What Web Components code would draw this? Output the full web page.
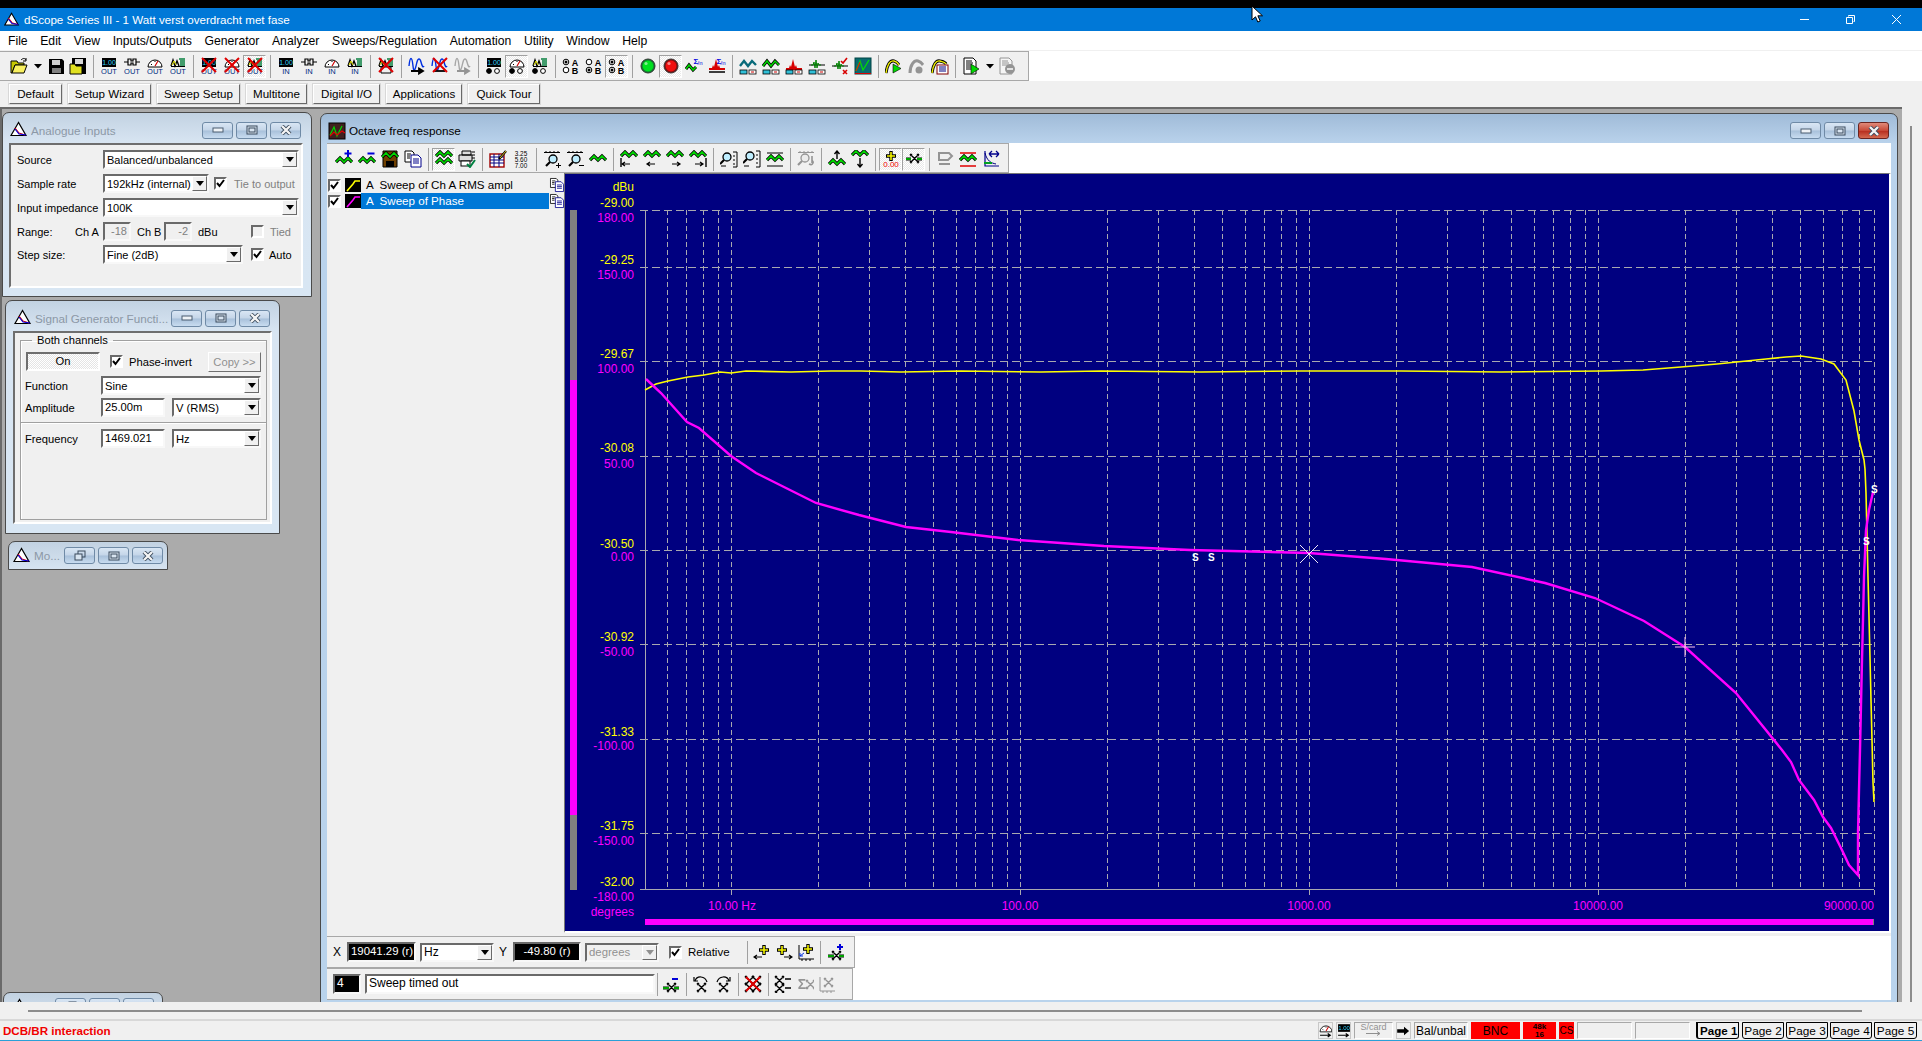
<!DOCTYPE html>
<html>
<head>
<meta charset="utf-8">
<title>dScope Series III</title>
<style>
  html, body { margin: 0; padding: 0; background: #f0f0f0; overflow: hidden; }
  body { font: 12px "Liberation Sans", Arial, sans-serif; color: #000; }
</style>
</head>
<body>
<ds-app></ds-app>
<script>
// --- icon bits, all on an 18x18 grid
const txt = (x, y, s, fs, fill, w) =>
  `<text x="${x}" y="${y}" font-size="${fs}" fill="${fill}" font-family="Liberation Sans" font-weight="${w || 'normal'}" text-anchor="middle">${s}</text>`;
const line = (d, c, w) => `<path d="${d}" fill="none" stroke="${c || '#000'}" stroke-width="${w || 1}"/>`;
const wave = (dy, c) => {
  const d = `M1 ${11 + (dy || 0)}l4-4 4 4 4-4 4 4`;
  return line(d, '#000', 3.2) + line(d, c || '#00d800', 1.6);
};
const grey = (s) => `<g opacity=".38" style="filter:grayscale(1)">${s}</g>`;
const redX = line('M2 1L16 15M16 1L2 15', '#e00000', 2);
const disp = `<rect x="2" y="1" width="14" height="9" fill="#000"/>` + txt(9, 8, '1.00', 7, '#30d0ff');
const conn = line('M1 5h4M13 5h4M5 2h3v2h2V2h3v6h-3V6H8v2H5z', '#000', 1.2);
const meter = `<path d="M2 10a7 7 0 0 1 14 0z" fill="#fff" stroke="#000"/>` + line('M9 9l3-5', '#d00000', 1.2) + line('M5 7l1 1M9 4v1', '#000');
const multi = line('M2 9l2-6 2 6 2-5 2 5', '#000', 1.4) + line('M3 8l2-4 2 4', '#e8e800', 1) + line('M10 2h6M11 4h5M11 6h5M11 8h5', '#088040', 1.4) + line('M2 9.5h14', '#000');
const io = (glyph, label, x) => glyph + txt(9, 17, label, 7.5, '#002a80') + (x ? redX : '');
const floppy = (x, y, s) => `<g transform="translate(${x} ${y}) scale(${s})"><path d="M1 1h13l2 2v13H1z" fill="#000"/><rect x="4" y="2" width="8" height="5" fill="#d0d0d0"/><rect x="4" y="10" width="9" height="5" fill="#808080"/></g>`;
const radios = `<circle cx="4" cy="14" r="2.4" fill="#000" stroke="#000"/><circle cx="12" cy="14" r="2.4" fill="#fff" stroke="#000"/>`;
const ab = (a, b) =>
  `<circle cx="4" cy="5" r="2.8" fill="#fff" stroke="#000"/>${a ? '<circle cx="4" cy="5" r="1.5"/>' : ''}` +
  `<circle cx="4" cy="13" r="2.8" fill="#fff" stroke="#000"/>${b ? '<circle cx="4" cy="13" r="1.5"/>' : ''}` +
  txt(13, 9, 'A', 9, '#000', 'bold') + txt(13, 17, 'B', 9, '#000', 'bold');
const led = (c, d) => `<circle cx="9" cy="9" r="7" fill="${d}" stroke="#333"/><circle cx="9" cy="9" r="5.4" fill="${c}"/><circle cx="7" cy="6.5" r="1.6" fill="#fff" opacity=".5"/>`;
const boxes = `<rect x="1" y="13" width="7" height="4" fill="#30c0d8" stroke="#000" stroke-width=".8"/><rect x="10" y="13" width="7" height="4" fill="#fff" stroke="#000" stroke-width=".8"/>` + line('M12 15h3', '#d00000');
const peak = (c) => `<path d="M1 11h3l1-3 1 2 2-8 2 8 1-2 1 3h5v2H1z" fill="${c}"/>`;
const sigma = txt(11, 7, '&#931;', 8, '#0000e0', 'bold') + txt(15, 8, '/n', 6, '#0000e0');
const lens = (x, y) => `<circle cx="${x}" cy="${y}" r="4" fill="#bfeeff" stroke="#000" stroke-width="1.3"/>` + line(`M${x - 3} ${y + 3}l-4 4`, '#000', 2.2);
const ruler = line('M1 2.5h16M3 1v2M7 1v2M11 1v2M15 1v2', '#000');
const yellowPlus = (x, y) => line(`M${x} ${y - 5}v10M${x - 5} ${y}h10`, '#000', 3.4) + line(`M${x} ${y - 4}v8M${x - 4} ${y}h8`, '#f4f400', 1.6);
const hatchX = (x, y, c) => `<g transform="translate(${x} ${y})">` + line('M0 0l9 9M9 0L0 9M2 0L0 2M7 0l2 2M0 7l2 2M9 7L7 9', c || '#000', 1.4) + '</g>';
const copyDocs = `<path d="M1 1h7l2 2v9H1z" fill="#fff" stroke="#000"/><path d="M7 5h7l3 3v9H7z" fill="#fff" stroke="#00008a"/>` + line('M9 9h6M9 11h6M9 13h6', '#00008a') + line('M3 4h4M3 6h3M3 8h3', '#000');
const arrowH = (x, y, dir) => dir > 0
  ? line(`M${x} ${y}h8M${x + 5} ${y - 2}l3 2-3 2`, '#000', 1.2)
  : line(`M${x + 8} ${y}h-8M${x + 3} ${y - 2}l-3 2 3 2`, '#000', 1.2);
const blueWave = line('M1 9c1-10 3-10 4 0s3 0 4-4 3-4 4 0 2 6 3 4', '#0030e0', 1.4);
const loop = (flip) => `<g ${flip ? 'transform="matrix(-1 0 0 1 18 0)"' : ''}>` + line('M3 6c2-6 10-5 12 1', '#000', 1.2) + line('M2 2v4h4', '#000', 1.2) + '</g>' + hatchX(5, 8);

const ICONS = {
  open: `<path d="M1 4h6l1 2h6v2H5l-3 8H1z" fill="#c8c800" stroke="#000"/><path d="M5 8h12l-3 8H2z" fill="#f8f060" stroke="#000"/>` + line('M11 3c2-2 4-2 5 0M16 1v3h-3', '#000'),
  drop: `<path d="M5 7h8l-4 4.5z" fill="#000"/>`,
  save: floppy(1, 1, 1),
  saveall: `<path d="M3 1h14v16H3z" fill="#000"/><rect x="6" y="2" width="8" height="5" fill="#d8d8d8"/><path d="M1 7h5l1 2h6v8H1z" fill="#e0e020" stroke="#000"/>`,
  out1: io(disp, 'OUT'), out2: io(conn, 'OUT'), out3: io(meter, 'OUT'), out4: io(multi, 'OUT'),
  xout1: io(disp, 'OUT', 1), xout2: io(meter, 'OUT', 1), xout3: io(multi, 'OUT', 1),
  in1: io(disp, 'IN'), in2: io(conn, 'IN'), in3: io(meter, 'IN'), in4: io(multi, 'IN'),
  xbox: multi + line('M4 10h10v6H4z', '#000') + redX,
  sw1: blueWave + line('M3 14h11M11 11.5l4 2.5-4 2.5z', '#000', 1.8),
  sw2: blueWave + line('M3 14h11', '#000', 1.8) + redX,
  sw3: grey(blueWave + line('M3 14h11M11 11.5l4 2.5-4 2.5z', '#000', 1.8)),
  rd1: disp + radios, rd2: meter + radios, rd3: multi + radios,
  ab1: ab(1, 0), ab2: ab(0, 1), ab3: ab(1, 1),
  green: led('#00e020', '#108030'), red: led('#f01010', '#801010'),
  sig1: sigma + line('M1 12l3-4 4 5 3-3', '#000', 3) + line('M1 12l3-4 4 5 3-3', '#00d800', 1.6),
  sig2: sigma + peak('#d80000') + line('M1 15h16', '#000', 1.5),
  g1: line('M1 9l4-5 4 5 4-5 4 4', '#086a7a', 2.4) + boxes,
  g2: line('M1 9l4-5 4 5 4-5 4 4', '#000', 3) + line('M1 9l4-5 4 5 4-5 4 4', '#00d800', 1.5) + boxes,
  g3: peak('#d80000') + boxes,
  g4: line('M1 8h16', '#000') + line('M3 8h2l1-3 1 6 1-8 1 8 1-5 1 2h2', '#008000') + boxes,
  g5: line('M1 9h16', '#000') + line('M3 9h2l1-3 1 6 1-8 1 8 1-5 1 2h2', '#008000') + line('M10 4l2 2 4-5', '#d80000', 1.6) + line('M12 13l4 4M16 13l-4 4', '#d80000', 1.6),
  g6: `<rect x="1" y="1" width="16" height="16" fill="#0a6a70" stroke="#044"/>` + line('M2 14l4-10 3 9 6-10', '#00e000', 1.2) + line('M2 14l4-9', '#f00', 1) + line('M1 16.5h16', '#d80000'),
  seq1: line('M1 16c1-8 4-13 8-12s4 3 5 4', '#000', 3) + line('M1 16c1-8 4-13 8-12s4 3 5 4', '#f0f000', 1.4) + `<path d="M8 7l8 4.5-8 4.5z" fill="#00d800" stroke="#000" stroke-width=".6"/>`,
  seq2: grey(line('M2 16c0-8 4-13 8-12s4 3 5 4', '#000', 3) + `<circle cx="11" cy="13" r="3.5" fill="#000"/>`),
  seq3: line('M1 16c1-8 4-13 8-12s5 1 6 3', '#000', 3) + line('M1 16c1-8 4-13 8-12s5 1 6 3', '#f0f000', 1.4) + `<rect x="6" y="8" width="11" height="9" fill="#fff" stroke="#800000"/>` + line('M8 10h7M8 12h7M8 14h7', '#000080'),
  run: `<path d="M2 1h9l3 3v13H2z" fill="#fff" stroke="#000"/>` + line('M4 4h6M4 6h7M4 8h6M4 10h5M4 12h5', '#000') + `<path d="M9 7l8 5-8 5z" fill="#00d800" stroke="#000" stroke-width=".6"/>`,
  stop: grey(`<path d="M2 1h9l3 3v13H2z" fill="#fff" stroke="#000"/>` + line('M4 4h6M4 6h7M4 8h6', '#000') + `<circle cx="12" cy="12" r="5" fill="#000"/>` + line('M9 12h6', '#fff', 1.6)),
  // graph window toolbar
  addw: wave(1) + line('M13 0v7M9.5 3.5h7', '#0000d8', 2),
  subw: wave(1) + line('M9.5 3.5h7', '#0000d8', 2),
  savew: `<path d="M2 1h14v16H2z" fill="#704000" stroke="#000"/><rect x="5" y="11" width="8" height="6" fill="#000"/>` + wave(-4),
  copy: copyDocs,
  wsel: wave(-5) + wave(2),
  print: `<path d="M4 1h9v4H4zM1 5h13v6H1z" fill="#ddd" stroke="#000"/><rect x="3" y="11" width="9" height="5" fill="#fff" stroke="#000"/>` + line('M14 2h3M14 5h3M14 8h3', '#000') + line('M9 14l3 3 5-7', '#008040', 2),
  table: `<rect x="1" y="4" width="14" height="13" fill="#fff" stroke="#a00000" stroke-width="1.4"/>` + line('M1 7h14M1 10h14M1 13h14M5 4v13M10 4v13', '#000080') + line('M10 9l7-8', '#000', 2.4) + line('M11 8l6-7', '#e0c020', 1),
  nums: txt(9, 6, '3.25', 6.4, '#000') + txt(9, 12, '5.60', 6.4, '#000') + txt(9, 18, '7.00', 6.4, '#000'),
  zin: ruler + lens(10, 9) + line('M13 15.5h5M15.5 13v5', '#000'),
  zout: ruler + lens(10, 9) + line('M13 15.5h5', '#000'),
  wflat: wave(-1),
  wl1: wave(-5) + arrowH(2, 14, -1) + line('M1 8v9', '#000', 1.4),
  wl2: wave(-5) + arrowH(4, 14, -1),
  wr1: wave(-5) + arrowH(6, 14, 1),
  wr2: wave(-5) + arrowH(6, 14, 1) + line('M17 8v9', '#000', 1.4),
  zy: lens(7, 7) + line('M13 2h4v15h-4M13 6h2M13 10h2M13 14h2', '#000') + line('M1 16h5', '#000'),
  zyo: lens(7, 6) + line('M13 1h4v16h-4M13 5h2M13 9h2M13 13h2', '#000') + line('M1 16h5', '#000'),
  wline: line('M1 3h16M1 16h16', '#000') + wave(-1),
  zgrey: grey(ruler + lens(8, 8) + line('M12 14c4 2 5-2 3-4M15 6v7', '#000', 1.6)),
  wup: wave(3) + line('M9 9V1M6.5 4L9 1l2.5 3', '#000', 1.4),
  wdn: wave(-6) + line('M9 8v9M6.5 14L9 17l2.5-3', '#000', 1.4),
  cur0: yellowPlus(9, 6) + txt(9, 17, '0.00', 8, '#f00000'),
  curs: line('M1 9h5M12 9h5', '#000', 3) + line('M1 9h5M12 9h5', '#00d800', 1.4) + hatchX(5, 4),
  tgrey: grey(line('M3 3h10l3 3-4 4H3z', '#000', 2) + line('M3 14h11', '#000', 2)),
  wlimit: line('M1 3h16M1 16h16', '#e00000', 1.4) + wave(-1),
  fshift: line('M3 1v15h14', '#00008a', 1.2) + line('M3 3c2 8 6 10 11 11', '#000080') + line('M2 13h8', '#00a020', 2) + line('M7 4h10M7 4l3-3M7 4l3 3M17 4l-3-3M17 4l-3 3', '#00008a', 1.3),
  // cursors row
  cl: yellowPlus(11, 7) + arrowH(1, 14, -1),
  cr: yellowPlus(7, 7) + arrowH(9, 14, 1),
  cg: line('M2 2v14h15M5 16v2M9 16v2M13 16v2', '#000') + line('M3 13l4-3M3 13h3M3 13v-3', '#0030e0') + yellowPlus(11, 6),
  cadd: line('M1 13h6M12 13h5', '#000', 3) + line('M1 13h6M12 13h5', '#00d800', 1.4) + hatchX(5, 8) + line('M13 1v6M10 4h6', '#0000d8', 2),
  csub: line('M1 13h6M12 13h5', '#000', 3) + line('M1 13h6M12 13h5', '#00d800', 1.4) + hatchX(5, 8) + line('M10 4h6', '#0000d8', 2),
  undo: loop(0), redo: loop(1),
  xdel: hatchX(1, 1) + hatchX(8, 1) + hatchX(1, 8) + hatchX(8, 8) + line('M2 2l14 14M16 2L2 16', '#e00000', 2),
  list: hatchX(1, 1) + hatchX(1, 9) + line('M11 4h6M11 13h6', '#000', 1.4),
  sumx: grey(txt(6, 14, '&#931;', 14, '#000', 'bold') + hatchX(10, 5)),
  cplot: grey(line('M2 2v14h15M5 16v2M9 16v2M13 16v2', '#000') + hatchX(6, 3)),
  // status bar
  st1: meter + line('M2 14h12M11 12l3 2-3 2', '#000', 1.4),
  st2: disp + line('M2 14h12M11 12l3 2-3 2', '#000', 1.4),
  arrow: `<path d="M1 7h8V4l6 5-6 5v-3H1z" fill="#000"/>`,
  logo: `<path d="M8.5 1.5L1 14.5h15z" fill="#fff" stroke="#000" stroke-width="1.2"/>` + line('M5 7l4 5 6 2', '#e00000', 1.2) + line('M5 8l4 5 7 1', '#0000e0', 1.2),
  graph: `<rect x="1" y="1" width="16" height="16" fill="#402020" stroke="#000"/>` + line('M2 13l4-8 3 9 5-10', '#00d800', 1.2) + line('M2 14l4-4 3 3 5-4 3 2', '#e00000', 1.2),
};

class DsBase extends HTMLElement {
  connectedCallback() {
    if (this.shadowRoot) return;
    this.attachShadow({ mode: 'open' }).innerHTML = `<style>${this.css()}</style>${this.html()}`;
  }
  css() { return ':host{display:block}'; }
  html() { return '<slot></slot>'; }
  attr(n, d) { return this.hasAttribute(n) ? this.getAttribute(n) : d; }
}

class DsIcon extends DsBase {
  css() { return `:host{display:inline-flex;width:18px;height:18px} svg{display:block}`; }
  html() {
    return `<svg width="18" height="18" viewBox="0 0 18 18" xmlns="http://www.w3.org/2000/svg">${ICONS[this.attr('name')] || ''}</svg>`;
  }
}
customElements.define('ds-icon', DsIcon);

class DsTool extends DsBase {
  css() {
    return `:host{display:flex;width:${this.attr('w', 23)}px;height:23px;align-items:center;justify-content:center;box-sizing:border-box;flex:none}
      :host([pressed]){border:1px solid;border-color:#a0a0a0 #fff #fff #a0a0a0;background:#f8f8f8 repeating-conic-gradient(#e8e8e8 0 25%,#fff 0 50%) 0 0/2px 2px}`;
  }
  html() { return `<ds-icon name="${this.attr('name')}"></ds-icon>`; }
}
customElements.define('ds-tool', DsTool);

class DsSep extends DsBase {
  css() { return `:host{display:block;flex:none;width:1px;height:23px;background:#a0a0a0;margin:0 ${this.attr('m', 3.5)}px 0 ${this.attr('l', 3.5)}px}`; }
}
customElements.define('ds-sep', DsSep);

// grey strip with hairlines; what is right of it stays white
class DsBar extends DsBase {
  css() {
    return `:host{display:flex;background:#fff;box-sizing:border-box;overflow:hidden}
      .in{display:flex;align-items:center;background:#f0f0f0;width:${this.attr('w')}px;box-sizing:border-box;padding-left:${this.attr('pad', 0)}px;padding-top:${this.attr('ptop', 0)}px;
        border-top:1px solid #a8a8a8;border-bottom:1px solid #a8a8a8;border-right:1px solid #a8a8a8;flex:none}
      ::slotted(*){flex:none}`;
  }
  html() { return `<div class="in"><slot></slot></div>`; }
}
customElements.define('ds-bar', DsBar);

class DsCombo extends DsBase {
  css() {
    const off = this.hasAttribute('disabled');
    return `:host{display:block;flex:none;width:${this.attr('w')}px;height:19px;box-sizing:border-box;border:2px solid;border-color:#6a6a6a #f8f8f8 #f8f8f8 #6a6a6a;
        background:${off ? '#f0f0f0' : '#fff'};color:${off ? '#909090' : '#000'}}
      .r{display:flex;height:100%;align-items:center}
      .v{flex:1;padding-left:2px;white-space:nowrap;overflow:hidden}
      .b{width:15px;height:15px;box-sizing:border-box;background:#f0f0f0;border:1px solid;border-color:#fff #6a6a6a #6a6a6a #fff;display:flex;align-items:center;justify-content:center}
      .b i{border:4px solid transparent;border-top:5px solid ${off ? '#909090' : '#000'};border-bottom:0}`;
  }
  html() { return `<div class="r"><div class="v">${this.attr('value', '')}</div><div class="b"><i></i></div></div>`; }
}
customElements.define('ds-combo', DsCombo);

class DsField extends DsBase {
  css() {
    const k = this.attr('kind', 'edit');
    const bg = k === 'black' ? '#000' : k === 'ro' ? '#f0f0f0' : '#fff';
    const fg = k === 'black' ? '#fff' : k === 'ro' ? '#808080' : '#000';
    return `:host{display:block;flex:none;width:${this.attr('w')}px;height:${this.attr('h', 19)}px;box-sizing:border-box;border:2px solid;
        border-color:#6a6a6a #f8f8f8 #f8f8f8 #6a6a6a;background:${bg};color:${fg};line-height:15px;
        padding:0 2px;white-space:nowrap;overflow:hidden;text-align:${this.attr('align', 'left')};font-size:${this.attr('fs', 'inherit')}}`;
  }
  html() { return this.attr('value', ''); }
}
customElements.define('ds-field', DsField);

class DsCheck extends DsBase {
  css() {
    const off = this.hasAttribute('disabled');
    return `:host{display:inline-flex;flex:none;align-items:center;gap:${this.attr('gap', 6)}px;color:${off ? '#808080' : '#000'}}
      .b{width:13px;height:13px;box-sizing:border-box;border:2px solid;border-color:#6a6a6a #fff #fff #6a6a6a;background:${off && !this.hasAttribute('checked') ? '#f0f0f0' : '#fff'};display:block}
      svg{display:block;margin:-1px}`;
  }
  html() {
    const t = this.hasAttribute('checked')
      ? `<svg width="11" height="11" viewBox="0 0 11 11"><path d="M2 5l2.5 3L9 2" fill="none" stroke="#000" stroke-width="2"/></svg>` : '';
    return `<span class="b">${t}</span><span>${this.attr('label', '')}</span>`;
  }
}
customElements.define('ds-check', DsCheck);

// the little glossy buttons on a child window
class DsWinBtn extends DsBase {
  css() {
    const red = this.attr('kind') === 'close-red';
    const bg = red ? 'linear-gradient(#e08a7a,#c84a38 50%,#b83020 55%,#d46a50)' : 'linear-gradient(#d9e6f4,#c4d5e8 48%,#a8c0da 52%,#c8dcf0)';
    return `:host{display:flex;flex:none;width:${this.attr('w', 31)}px;height:17px;box-sizing:border-box;border:1px solid ${red ? '#6a2420' : '#6f8aa6'};border-radius:3px;
        background:${bg};align-items:center;justify-content:center}`;
  }
  html() {
    const k = this.attr('kind');
    if (k === 'min') return `<svg width="12" height="6"><rect x="1" y="1" width="10" height="4" fill="#eef2f6" stroke="#4a5c70"/></svg>`;
    if (k === 'max') return `<svg width="12" height="10"><rect x="1" y="1" width="10" height="8" fill="#d8e4f0" stroke="#3a4a5c"/><rect x="3" y="3" width="6" height="4" fill="none" stroke="#3a4a5c"/></svg>`;
    if (k === 'restore') return `<svg width="12" height="12"><rect x="4" y="1" width="7" height="6" fill="none" stroke="#3a4a5c"/><rect x="1" y="4" width="7" height="6" fill="#d8e4f0" stroke="#3a4a5c"/></svg>`;
    return `<svg width="14" height="10"><path d="M3 1l8 8M11 1L3 9" stroke="#3a4a5c" stroke-width="4"/><path d="M3 1l8 8M11 1L3 9" stroke="#f4f4f4" stroke-width="2.4"/></svg>`;
  }
}
customElements.define('ds-win-btn', DsWinBtn);

// MDI child; its place on the desktop is its content, so x/y are page coordinates
class DsWindow extends DsBase {
  css() {
    const active = this.hasAttribute('active');
    const pad = this.attr('pad', 6);
    return `:host{display:block;position:absolute;left:${this.attr('x')}px;top:${+this.attr('y') - 107}px;width:${this.attr('w')}px;height:${this.attr('h')}px;
        box-sizing:border-box;border:1px solid #4a4a4a;border-radius:7px 7px 0 0;padding:0 ${pad}px ${pad}px;
        background:${active ? 'linear-gradient(#a0bbd8,#bad3ec 30px,#b9d3ec)' : 'linear-gradient(#c2d2e2,#d8e5f2 30px,#d8e6f3)'}}
      .t{height:${this.attr('th', 30)}px;box-sizing:border-box;padding:${this.attr('tpad', 4)}px ${this.attr('rpad', 2)}px 0 ${this.attr('lpad', 1)}px;display:flex;align-items:center;gap:0}
      .ic{width:18px;height:18px;margin-right:3px}
      .n{flex:1;white-space:nowrap;overflow:hidden;color:${active ? '#000' : '#8c98a6'};font-size:${this.attr('fs', 11.7)}px}
      .bs{display:flex;gap:3px}`;
  }
  html() {
    const first = this.hasAttribute('restore') ? 'restore' : 'min';
    const close = this.hasAttribute('active') ? 'close-red' : 'close';
    return `<div class="t"><ds-icon class="ic" name="${this.attr('icon', 'logo')}"></ds-icon><div class="n">${this.attr('name')}</div>
      <div class="bs"><ds-win-btn kind="${first}"></ds-win-btn><ds-win-btn kind="max"></ds-win-btn><ds-win-btn kind="${close}"></ds-win-btn></div></div><slot></slot>`;
  }
}
customElements.define('ds-window', DsWindow);

class DsAnalogue extends DsBase {
  css() {
    return `:host{display:block;height:145px;box-sizing:border-box;margin-right:2px;background:#f0f0f0;border:2px solid;border-color:#6e6e6e #fff #fff #6e6e6e;padding:5px 0 0 6px;font-size:11px}
      .row{display:flex;align-items:center;height:19px;margin-bottom:5px}
      .l{flex:none;white-space:nowrap}`;
  }
  html() {
    return `<div class="row"><span class="l" style="width:86px">Source</span><ds-combo w="196" value="Balanced/unbalanced"></ds-combo></div>
      <div class="row"><span class="l" style="width:86px">Sample rate</span><ds-combo w="106" value="192kHz (internal)"></ds-combo><ds-check style="margin-left:5px" gap="7" checked disabled label="Tie to output"></ds-check></div>
      <div class="row"><span class="l" style="width:86px">Input impedance</span><ds-combo w="196" value="100K"></ds-combo></div>
      <div class="row" style="margin-bottom:4px"><span class="l" style="width:58px">Range:</span><span class="l" style="width:28px">Ch A</span><ds-field w="28" kind="ro" align="right" value="-18"></ds-field>
        <span class="l" style="margin-left:6px;width:27px">Ch B</span><ds-field w="28" kind="ro" align="right" value="-2"></ds-field><span class="l" style="margin-left:6px;width:53px">dBu</span><ds-check gap="6" disabled label="Tied"></ds-check></div>
      <div class="row"><span class="l" style="width:86px">Step size:</span><ds-combo w="140" value="Fine (2dB)"></ds-combo><ds-check style="margin-left:8px" gap="5" checked label="Auto"></ds-check></div>`;
  }
}
customElements.define('ds-analogue', DsAnalogue);

class DsSigGen extends DsBase {
  css() {
    return `:host{display:block;height:193px;box-sizing:border-box;background:#f0f0f0;border:2px solid;border-color:#6e6e6e #fff #fff #6e6e6e;padding:0 3px 3px 5px;font-size:11.2px}
      fieldset{margin:0;padding:1px 5px 0;height:187px;box-sizing:border-box;border:1px solid #a0a0a0;box-shadow:inset 1px 1px #fff}
      legend{margin-left:6px;padding:0 5px;height:14px;line-height:14px}
      .row{display:flex;align-items:center;height:19px}
      .l{flex:none;width:74px;margin-left:-1px;margin-right:2px}
      .on{flex:none;width:74px;height:19px;box-sizing:border-box;border:2px solid;border-color:#6e6e6e #fff #fff #6e6e6e;text-align:center;line-height:15px;
        background:repeating-conic-gradient(#e4e4e4 0 25%,#fff 0 50%) 0 0/2px 2px}
      .copy{margin-left:auto;width:53px;height:20px;box-sizing:border-box;border:1px solid;border-color:#fff #707070 #707070 #fff;background:#f0f0f0;color:#909090;text-align:center;line-height:18px}
      hr{border:0;border-top:1px solid #a0a0a0;border-bottom:1px solid #fff;margin:5px -5px 5px}`;
  }
  html() {
    return `<fieldset><legend>Both channels</legend>
      <div class="row" style="margin-top:4px"><div class="on">On</div><ds-check style="margin-left:10px" gap="6" checked label="Phase-invert"></ds-check><div class="copy">Copy &gt;&gt;</div></div>
      <div class="row" style="margin-top:5px"><span class="l">Function</span><ds-combo w="160" value="Sine"></ds-combo></div>
      <div class="row" style="margin-top:3px"><span class="l">Amplitude</span><ds-field w="64" value="25.00m"></ds-field><ds-combo style="margin-left:7px" w="89" value="V (RMS)"></ds-combo></div>
      <hr>
      <div class="row"><span class="l">Frequency</span><ds-field w="64" value="1469.021"></ds-field><ds-combo style="margin-left:7px" w="89" value="Hz"></ds-combo></div>
      </fieldset>`;
  }
}
customElements.define('ds-siggen', DsSigGen);

class DsLegend extends DsBase {
  css() {
    return `:host{display:block;background:#f0f0f0;padding:4px 0 0 1px;box-sizing:border-box;position:relative;font-size:11.6px}
      .row{display:flex;align-items:center;height:16px}
      .sw{flex:none;width:16px;height:14px;margin:0 0 0 4px;background:#000;display:block}
      .n{flex:none;width:188px;height:16px;line-height:16px;white-space:pre;box-sizing:border-box;padding-left:5px}
      .sel{background:#0078d7;color:#fff}
      ds-icon{margin-left:-1px;transform:scale(.82)}`;
  }
  row(color, name, sel) {
    return `<div class="row"><ds-check checked gap="0"></ds-check>
      <svg class="sw" viewBox="0 0 16 14"><path d="M2 13L8 6 L10 3 H15" fill="none" stroke="${color}" stroke-width="1.6"/></svg>
      <div class="n ${sel ? 'sel' : ''}">A  ${name}</div><ds-icon name="copy"></ds-icon></div>`;
  }
  html() {
    return this.row('#ffff00', 'Sweep of Ch A RMS ampl') + this.row('#ff00ff', 'Sweep of Phase', true);
  }
}
customElements.define('ds-legend', DsLegend);

class DsPlot extends DsBase {
  css() {
    return `:host{display:block;box-sizing:border-box;border:1px solid;border-color:#777 #fff #fff #777;border-right-width:2px;border-bottom-width:2px;background:#000080}
      svg{display:block} text{font-family:"Liberation Sans",Arial,sans-serif;font-size:12px}`;
  }
  html() {
    const dx = (f) => 730 + 289 * Math.log10(f / 10);
    const ys = [210.5, 267.5, 361.5, 456.5, 550.5, 644.5, 739.5, 833.5];
    let g = '';
    ys.forEach((y) => { g += `<path d="M639 ${y}H1873" stroke="#a8a8b0" stroke-dasharray="8 4"/>`; });
    g += `<path d="M639 889.5H1873M644.5 210V889" stroke="#a8a8b0"/>`;
    const fs = [6, 7, 8, 9];
    [1, 10, 100, 1000, 10000].forEach((dec) => {
      [1, 2, 3, 4, 5, 6, 7, 8, 9].forEach((m) => {
        const f = 10 * dec * m;
        if (f > 90000) return;
        g += `<path d="M${Math.round(dx(f)) + 0.5} 210V${m === 1 || f === 90000 ? 895 : 889}" stroke="#a8a8b0" stroke-dasharray="5 3"/>`;
      });
    });
    fs.forEach((f) => { g += `<path d="M${Math.round(dx(f)) + 0.5} 210V889" stroke="#a8a8b0" stroke-dasharray="5 3"/>`; });
    const yl = [['-29.00', 207], ['-29.25', 264], ['-29.67', 358], ['-30.08', 452], ['-30.50', 548], ['-30.92', 641], ['-31.33', 736], ['-31.75', 830], ['-32.00', 886]];
    const ml = [['180.00', 222], ['150.00', 279], ['100.00', 373], ['50.00', 468], ['0.00', 561], ['-50.00', 656], ['-100.00', 750], ['-150.00', 845], ['-180.00', 901]];
    let t = `<text x="633" y="191" text-anchor="end" fill="#ffff00">dBu</text><text x="633" y="916" text-anchor="end" fill="#ff00ff">degrees</text>`;
    yl.forEach(([s, y]) => { t += `<text x="633" y="${y}" text-anchor="end" fill="#ffff00">${s}</text>`; });
    ml.forEach(([s, y]) => { t += `<text x="633" y="${y}" text-anchor="end" fill="#ff00ff">${s}</text>`; });
    [['10.00 Hz', 731], ['100.00', 1019], ['1000.00', 1308], ['10000.00', 1597]].forEach(([s, x]) => {
      t += `<text x="${x}" y="910" text-anchor="middle" fill="#ff00ff">${s}</text>`;
    });
    t += `<text x="1873" y="910" text-anchor="end" fill="#ff00ff">90000.00</text>`;
    const yellow = '644,390 655,384 667,381 687,377 703,375 719,372 730,373 745,371 790,372 830,371 860,371 900,372 960,371 1040,372 1100,371 1200,372 1300,371 1400,371 1500,372 1600,371 1642,370 1680,367 1716,364 1765,359 1785,357 1800,356 1820,359 1833,364 1845,380 1853,411 1858,440 1863,460 1864,469 1865,493 1867,577 1868,617 1869,658 1870,700 1871,740 1872,782 1873,802';
    const magenta = '645,379 660,393 686,422 698,428 730,456 755,473 785,488 815,503 858,515 905,527 950,532 1017,540 1103,546 1189,550 1308,553 1385,559 1471,567 1544,583 1594,598 1643,621 1684,647 1735,693 1781,750 1790,762 1798,780 1813,800 1822,817 1830,828 1840,848 1848,865 1857,875 1857,833 1858,790 1859,750 1860,705 1861,660 1862,620 1863,577 1865,530 1868,510 1872,492';
    return `<svg width="1324" height="756" viewBox="564 174 1324 756" xmlns="http://www.w3.org/2000/svg">
      <rect x="569" y="210" width="7" height="680" fill="#808080"/><rect x="569" y="380" width="7" height="435" fill="#ff00ff"/>
      <rect x="644" y="919" width="1229" height="6" fill="#ff00ff"/><rect x="1872" y="919" width="1" height="6" fill="#808080"/>
      ${g}${t}
      <polyline points="${yellow}" fill="none" stroke="#ffff00" stroke-width="1.6"/>
      <polyline points="${magenta}" fill="none" stroke="#ff00ff" stroke-width="2.4"/>
      <path d="M1299 545l18 18M1317 545l-18 18" stroke="#f0e8f8" stroke-width="1"/>
      <path d="M1684 637v20M1674 647h20" stroke="#ffc0f0" stroke-width="1"/>
      <g fill="#fff" font-weight="bold"><text x="1191" y="561" style="font-size:10px">S</text><text x="1207" y="561" style="font-size:10px">S</text>
      <text x="1862" y="545" style="font-size:10px">S</text><text x="1870" y="493" style="font-size:10px">S</text></g>
      </svg>`;
  }
}
customElements.define('ds-plot', DsPlot);

const tools = (list, w) => list.map((n) => {
  if (n === '|') return '<ds-sep></ds-sep>';
  const p = n.endsWith('*');
  return `<ds-tool name="${p ? n.slice(0, -1) : n}"${p ? ' pressed' : ''}${w ? ` w="${w}"` : ''}></ds-tool>`;
}).join('');

class DsGraphClient extends DsBase {
  css() {
    return `:host{display:grid;grid-template-rows:30px 760px 3px 32px 32px;grid-template-columns:237px 1fr;height:857px;background:#f0f0f0}
      ds-bar{grid-column:1/3}
      .mid{background:#f0f0f0}
      span{flex:none}`;
  }
  html() {
    return `<ds-bar w="682" pad="5" ptop="2" style="height:30px">${tools(['addw', 'subw', 'savew', 'copy', '|', 'wsel*', 'print', '|', 'table', 'nums', '|', 'zin', 'zout', 'wflat', '|', 'wl1', 'wl2', 'wr1', 'wr2', '|', 'zy', 'zyo', 'wline', '|', 'zgrey', '|', 'wup', 'wdn', '|', 'cur0*', 'curs*', '|', 'tgrey', 'wlimit', 'fshift'])}</ds-bar>
      <ds-legend></ds-legend><ds-plot></ds-plot>
      <div class="mid" style="grid-column:1/3"></div>
      <ds-bar w="528" style="height:32px">
        <span style="margin-left:6px;width:14px">X</span><ds-field kind="black" fs="11.4px" w="69" h="20" align="center" value="19041.29 (r)"></ds-field>
        <ds-combo style="margin-left:4px" w="74" value="Hz"></ds-combo><span style="margin-left:5px;width:14px">Y</span>
        <ds-field kind="black" fs="11.4px" w="68" h="20" align="center" value="-49.80 (r)"></ds-field><ds-combo style="margin-left:4px;font-size:11.4px" w="74" disabled value="degrees"></ds-combo>
        <ds-check style="margin-left:10px;font-size:11.5px" gap="6" checked label="Relative"></ds-check><ds-sep l="17" m="3"></ds-sep>
        ${tools(['cl', 'cr', 'cg', '|', 'cadd'], 22)}
      </ds-bar>
      <ds-bar w="526" style="height:32px">
        <ds-field style="margin-left:6px" kind="black" w="28" h="20" value="4"></ds-field><ds-field style="margin-left:4px" w="290" h="20" value="Sweep timed out"></ds-field>
        <ds-sep l="2" m="2"></ds-sep>${tools(['csub', '|', 'undo', 'redo', '|', 'xdel', '|', 'list', 'sumx', 'cplot'], 22)}
      </ds-bar>`;
  }
}
customElements.define('ds-graph-client', DsGraphClient);

class DsDesktop extends DsBase {
  css() {
    return `:host{display:block;position:relative;overflow:hidden;background:#ababab;box-shadow:inset 0 2px #6a6a6a,inset 2px 0 #6a6a6a}`;
  }
  html() {
    return `<ds-window x="2" y="112" w="310" h="185" rpad="4" name="Analogue Inputs"><ds-analogue></ds-analogue></ds-window>
      <ds-window x="5" y="300" w="275" h="234" pad="7" name="Signal Generator Functi..."><ds-siggen></ds-siggen></ds-window>
      <ds-window x="8" y="541" w="160" h="29" pad="3" rpad="1" tpad="0" th="27" restore name="Mo..."></ds-window>
      <ds-window x="3" y="992" w="160" h="29" pad="6" tpad="0" th="27" restore name=""></ds-window>
      <ds-window active x="320" y="113" w="1578" h="894" icon="graph" th="29" lpad="1" name="Octave freq response"><ds-graph-client></ds-graph-client></ds-window>`;
  }
}
customElements.define('ds-desktop', DsDesktop);

class DsAppTitle extends DsBase {
  css() {
    return `:host{display:flex;align-items:center;background:#0078d7;color:#fff;padding-left:3px;position:relative}
      .n{margin-left:3px;font-size:11.6px}
      ds-icon{transform:scale(.9)}
      .c{margin-left:auto;display:flex;margin-right:3px}
      .c div{width:46px;height:23px;display:flex;align-items:center;justify-content:center}`;
  }
  html() {
    return `<ds-icon name="logo"></ds-icon><span class="n">dScope Series III - 1 Watt verst overdracht met fase</span>
      <div class="c"><div><svg width="11" height="11"><path d="M1 5.5h9" stroke="#fff"/></svg></div>
      <div><svg width="11" height="11" fill="none" stroke="#fff"><path d="M3.5 2.5v-1h6v6h-1M1.5 3.5h6v6h-6z"/></svg></div>
      <div><svg width="11" height="11" stroke="#fff"><path d="M1 1l9 9M10 1l-9 9"/></svg></div></div>`;
  }
}
customElements.define('ds-app-title', DsAppTitle);

class DsMenu extends DsBase {
  css() {
    return `:host{display:flex;align-items:center;background:#fff;padding-left:8px;border-bottom:1px solid #f0f0f0;box-sizing:border-box;gap:12.6px}
      span{font-size:12.2px}`;
  }
  html() {
    return ['File', 'Edit', 'View', 'Inputs/Outputs', 'Generator', 'Analyzer', 'Sweeps/Regulation', 'Automation', 'Utility', 'Window', 'Help']
      .map((s) => `<span>${s}</span>`).join('');
  }
}
customElements.define('ds-menu', DsMenu);

class DsTextBtn extends DsBase {
  css() {
    return `:host{display:block;flex:none;width:${this.attr('w')}px;height:20px;box-sizing:border-box;border:1px solid;border-color:#fff #696969 #696969 #fff;
      box-shadow:0 0 0 1px #d8d8d8;background:#f0f0f0;text-align:center;line-height:18px;font-size:11.6px}`;
  }
}
customElements.define('ds-text-btn', DsTextBtn);

class DsButtons extends DsBase {
  css() { return `:host{display:flex;align-items:center;background:#f0f0f0;padding:0 0 0 9px;gap:6px}`; }
  html() {
    return [['Default', 53], ['Setup Wizard', 83], ['Sweep Setup', 83], ['Multitone', 61], ['Digital I/O', 67], ['Applications', 76], ['Quick Tour', 72]]
      .map(([s, w]) => `<ds-text-btn w="${w}">${s}</ds-text-btn>`).join('');
  }
}
customElements.define('ds-buttons', DsButtons);

class DsStatus extends DsBase {
  css() {
    return `:host{display:flex;align-items:stretch;background:#f0f0f0;border-top:1px solid #d8d8d8;box-sizing:border-box;padding:1px 0 1px 3px;font-size:12px}
      .msg{width:1315px;flex:none;color:#f00000;font-weight:bold;line-height:17px;font-size:11.6px}
      .ic{flex:none;width:15px;display:flex;align-items:center;justify-content:center;margin-right:3px;overflow:hidden;border:1px solid #c8c8c8;box-sizing:border-box}
      .cell{flex:none;box-sizing:border-box;border:1px solid;border-color:#a8a8a8 #fff #fff #a8a8a8;text-align:center;line-height:16px;margin-right:3px;white-space:nowrap;overflow:hidden}
      .red{background:#ff0000;color:#000;border-color:#ff0000}
      .sc{color:#909090;font-size:9px;line-height:9px}
      .sc svg{display:block;margin:-1px auto 0}
      .sm{font-size:8px;line-height:8px;font-weight:bold}
      .cs{font-size:10px;padding:0;border:0;line-height:18px}
      .tab{flex:none;box-sizing:border-box;border:1px solid #000;border-radius:0 0 3px 3px;text-align:center;line-height:16px;margin-left:2px;font-size:11.8px;white-space:nowrap;overflow:hidden}`;
  }
  html() {
    const ic = (n) => `<div class="ic"><ds-icon name="${n}" style="transform:scale(.85)"></ds-icon></div>`;
    const tabs = ['Page 2', 'Page 3', 'Page 4', 'Page 5'].map((p) => `<div class="tab" style="width:${p === 'Page 5' ? 43 : 42}px">${p}</div>`).join('');
    return `<div class="msg">DCB/BR interaction</div>${ic('st1')}${ic('st2')}
      <div class="cell sc" style="width:39px">S/card<svg width="20" height="5"><path d="M2 2.5h14M13 .5l3 2-3 2" fill="none" stroke="#909090"/></svg></div>${ic('arrow')}
      <div class="cell" style="width:54px">Bal/unbal</div>
      <div class="cell red" style="width:49px">BNC</div>
      <div class="cell red sm" style="width:33px">48k<br>16</div>
      <div class="cell red cs" style="width:15px">CS</div>
      <div class="cell" style="width:55px"></div><div class="cell" style="width:55px"></div>
      <div class="tab" style="width:43px;font-weight:bold;margin-left:3px;margin-right:1px;border-left:2px solid #000;text-align:left;padding-left:2px;font-size:11.6px">Page 1</div>${tabs}`;
  }
}
customElements.define('ds-status', DsStatus);

class DsApp extends DsBase {
  css() {
    return `:host{display:grid;width:1922px;height:1041px;grid-template-rows:8px 23px 20px 30px 26px 895px 18px 20px 1px;position:relative;overflow:hidden;background:#f0f0f0;
        font:12px "Liberation Sans",Arial,sans-serif}
      .blk{background:#000}
      .mid{display:grid;grid-template-columns:1902px 20px}
      .vs{background:#f0f0f0;padding:19px 0 0 8px}
      .vs i{display:block;width:2px;height:100%;background:#8c8c8c}
      .hs{background:#f0f0f0;padding:8px 0 0 28px;border-bottom:1px solid #d8d8d8;box-sizing:border-box}
      .hs i{display:block;width:1834px;height:2px;background:#8c8c8c}
      .btm{background:#2aa0d8}
      .cursor{position:absolute;left:1251px;top:5px}`;
  }
  html() {
    return `<div class="blk"></div><ds-app-title></ds-app-title><ds-menu></ds-menu>
      <ds-bar w="1029" pad="7">
        <ds-tool name="open"></ds-tool><ds-tool name="drop" w="15"></ds-tool><ds-tool name="save" w="21"></ds-tool>${tools(['saveall', '|', 'out1', 'out2', 'out3', 'out4', '|', 'xout1', 'xout2', 'xout3*', '|', 'in1', 'in2', 'in3', 'in4', '|', 'xbox', '|', 'sw1', 'sw2', 'sw3', '|', 'rd1', 'rd2*', 'rd3', '|', 'ab1', 'ab2', 'ab3*', '|', 'green', 'red*', 'sig1', 'sig2', '|', 'g1', 'g2', 'g3', 'g4', 'g5', 'g6', '|', 'seq1', 'seq2', 'seq3', '|', 'run'])}<ds-tool name="drop" w="15"></ds-tool><ds-tool name="stop" w="19"></ds-tool>
      </ds-bar>
      <ds-buttons></ds-buttons>
      <div class="mid"><ds-desktop></ds-desktop><div class="vs"><i></i></div></div>
      <div class="hs"><i></i></div>
      <ds-status></ds-status>
      <div class="btm"></div>
      <svg class="cursor" width="13" height="19" viewBox="0 0 13 19"><path d="M1 1v14l3.5-3.2 2.3 5.2 2.4-1-2.3-5.2h4.6z" fill="#fff" stroke="#000"/></svg>`;
  }
}
customElements.define('ds-app', DsApp);
</script>
</body>
</html>
